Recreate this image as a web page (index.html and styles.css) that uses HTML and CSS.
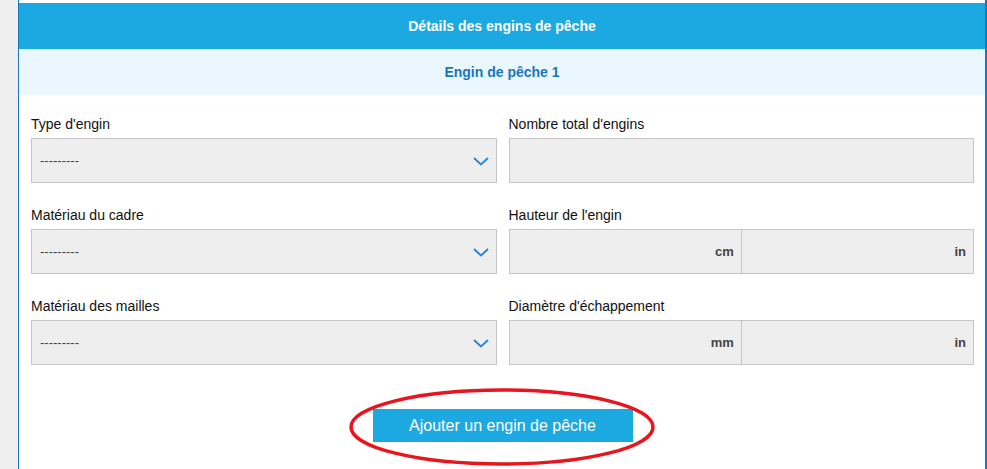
FILE: index.html
```html
<!DOCTYPE html>
<html lang="fr">
<head>
<meta charset="utf-8">
<title>Détails des engins de pêche</title>
<link rel="stylesheet" href="styles.css">
</head>
<body>
<div class="page">
  <div class="panel">
    <div class="panel-title">Détails des engins de pêche</div>
    <div class="panel-subtitle">Engin de pêche 1</div>
    <div class="form-grid">
      <div class="field">
        <div class="label">Type d'engin</div>
        <div class="select">
          <span class="placeholder">---------</span>
          <svg class="chevron" width="16" height="9" viewBox="0 0 16 9"><path d="M1 1 L8 7.5 L15 1" fill="none" stroke="#2b87d3" stroke-width="2"/></svg>
        </div>
      </div>
      <div class="field">
        <div class="label">Nombre total d'engins</div>
        <div class="input"></div>
      </div>
      <div class="field">
        <div class="label">Matériau du cadre</div>
        <div class="select">
          <span class="placeholder">---------</span>
          <svg class="chevron" width="16" height="9" viewBox="0 0 16 9"><path d="M1 1 L8 7.5 L15 1" fill="none" stroke="#2b87d3" stroke-width="2"/></svg>
        </div>
      </div>
      <div class="field">
        <div class="label">Hauteur de l'engin</div>
        <div class="unit-pair">
          <div class="unit">cm</div>
          <div class="unit">in</div>
        </div>
      </div>
      <div class="field">
        <div class="label">Matériau des mailles</div>
        <div class="select">
          <span class="placeholder">---------</span>
          <svg class="chevron" width="16" height="9" viewBox="0 0 16 9"><path d="M1 1 L8 7.5 L15 1" fill="none" stroke="#2b87d3" stroke-width="2"/></svg>
        </div>
      </div>
      <div class="field">
        <div class="label">Diamètre d'échappement</div>
        <div class="unit-pair">
          <div class="unit">mm</div>
          <div class="unit">in</div>
        </div>
      </div>
    </div>
    <div class="actions">
      <button class="add-btn" type="button">Ajouter un engin de pêche</button>
      <svg class="highlight" width="310" height="80" viewBox="0 0 310 80"><ellipse cx="155" cy="40" rx="151" ry="37" fill="none" stroke="#e8141e" stroke-width="3.5"/></svg>
    </div>
  </div>
</div>
</body>
</html>
```
FILE: styles.css
```css
html, body {
  margin: 0;
  padding: 0;
}
body {
  background: #efefef;
  font-family: "Liberation Sans", Arial, sans-serif;
  color: #111;
  height: 469px;
  overflow: hidden;
}
.page {
  display: flex;
  padding-left: 18px;
  height: 469px;
}
.panel {
  width: 966px;
  background: #ffffff;
  border-left: 1px solid #1b76c0;
  border-right: 2px solid #1b76c0;
  padding-top: 3px;
  display: flex;
  flex-direction: column;
}
.panel-title {
  height: 46px;
  background: #1ca9e1;
  color: #ffffff;
  font-weight: bold;
  font-size: 14px;
  display: flex;
  align-items: center;
  justify-content: center;
}
.panel-subtitle {
  height: 46px;
  background: #eaf7fe;
  color: #1a76bd;
  font-weight: bold;
  font-size: 14px;
  display: flex;
  align-items: center;
  justify-content: center;
}
.form-grid {
  display: grid;
  grid-template-columns: 1fr 1fr;
  column-gap: 12px;
  row-gap: 24px;
  padding: 21px 11px 0 12px;
}
.field {
  display: flex;
  flex-direction: column;
}
.label {
  font-size: 14px;
  line-height: 16px;
  color: #111;
  margin-bottom: 6px;
}
.select, .input, .unit-pair {
  height: 45px;
  box-sizing: border-box;
  border: 1px solid #c6c6c6;
  background: #eeeeee;
}
.select {
  display: flex;
  align-items: center;
  justify-content: space-between;
  padding: 0 7px 0 8px;
}
.placeholder {
  font-size: 13px;
  color: #444;
}
.chevron {
  display: block;
  margin-top: 1px;
}
.unit-pair {
  display: flex;
}
.unit {
  flex: 1;
  display: flex;
  align-items: center;
  justify-content: flex-end;
  padding-right: 7px;
  font-size: 13px;
  font-weight: bold;
  color: #444;
}
.unit + .unit {
  border-left: 1px solid #c6c6c6;
}
.actions {
  position: relative;
  display: flex;
  justify-content: center;
  padding-top: 44px;
}
.add-btn {
  width: 260px;
  height: 33px;
  border: none;
  background: #1ca9e1;
  color: #ffffff;
  font-family: "Liberation Sans", Arial, sans-serif;
  font-size: 16px;
  padding: 0;
  margin-left: 1px;
}
.highlight {
  position: absolute;
  left: 328px;
  top: 22px;
  pointer-events: none;
}
```
